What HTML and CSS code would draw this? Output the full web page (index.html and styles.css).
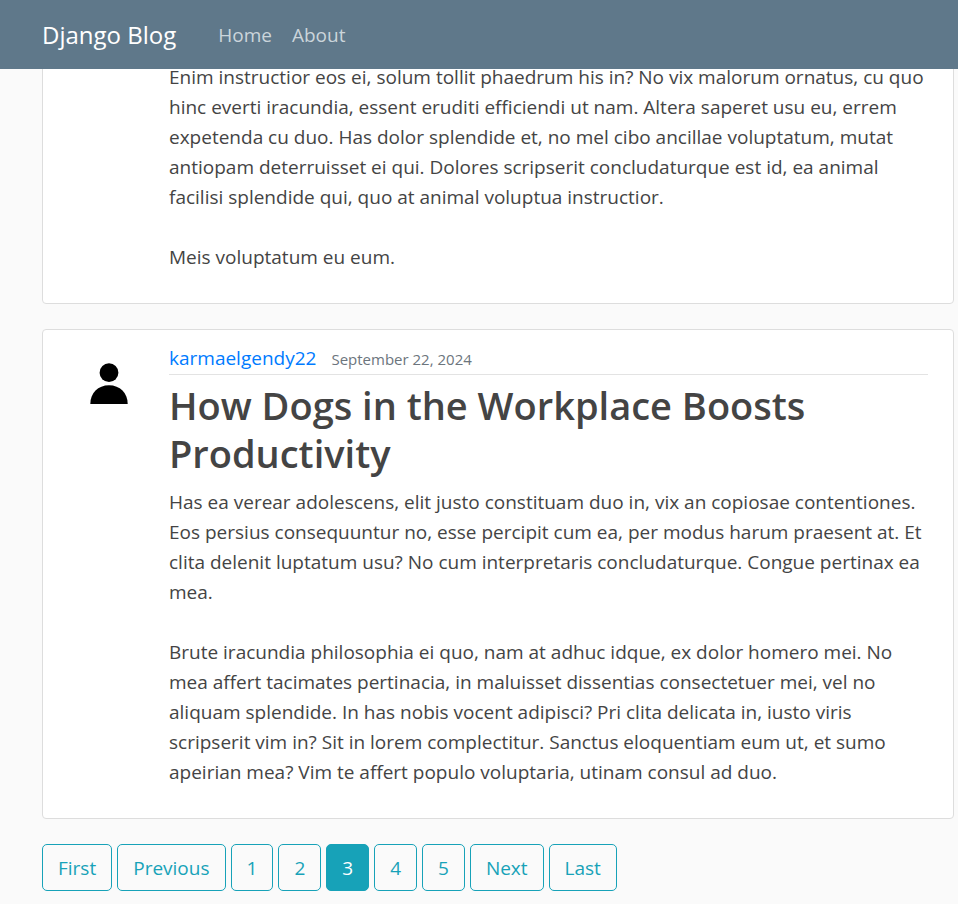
FILE: index.html
```html
<!DOCTYPE html>
<html lang="en">
<head>
<meta charset="utf-8">
<meta name="viewport" content="width=device-width, initial-scale=1">
<title>Django Blog</title>
<link rel="stylesheet" href="styles.css">
</head>
<body>
<header class="site-header">
  <nav class="navbar">
    <a class="brand" href="#">Django Blog</a>
    <a class="nav-link" href="#">Home</a>
    <a class="nav-link" href="#">About</a>
  </nav>
</header>
<main class="container">
  <article class="post">
    <div class="post-body">
      <p class="post-text">Enim instructior eos ei, solum tollit phaedrum his in? No vix malorum ornatus, cu quo hinc everti iracundia, essent eruditi efficiendi ut nam. Altera saperet usu eu, errem expetenda cu duo. Has dolor splendide et, no mel cibo ancillae voluptatum, mutat antiopam deterruisset ei qui. Dolores scripserit concludaturque est id, ea animal facilisi splendide qui, quo at animal voluptua instructior.

Meis voluptatum eu eum.</p>
    </div>
  </article>
  <article class="post">
    <svg class="avatar" viewBox="0 0 38 42" aria-hidden="true">
      <circle cx="19" cy="9.7" r="9.4"/>
      <path d="M0.3 41C0.3 30 8 22.3 19 22.3S37.7 30 37.7 41Z"/>
    </svg>
    <div class="post-body">
      <div class="post-meta">
        <a class="author" href="#">karmaelgendy22</a>
        <small class="date">September 22, 2024</small>
      </div>
      <h2 class="post-title">How Dogs in the Workplace Boosts Productivity</h2>
      <p class="post-text">Has ea verear adolescens, elit justo constituam duo in, vix an copiosae contentiones. Eos persius consequuntur no, esse percipit cum ea, per modus harum praesent at. Et clita delenit luptatum usu? No cum interpretaris concludaturque. Congue pertinax ea mea.

Brute iracundia philosophia ei quo, nam at adhuc idque, ex dolor homero mei. No mea affert tacimates pertinacia, in maluisset dissentias consectetuer mei, vel no aliquam splendide. In has nobis vocent adipisci? Pri clita delicata in, iusto viris scripserit vim in? Sit in lorem complectitur. Sanctus eloquentiam eum ut, et sumo apeirian mea? Vim te affert populo voluptaria, utinam consul ad duo.</p>
    </div>
  </article>
  <nav class="pagination" aria-label="Pages">
    <a class="page" href="#">First</a>
    <a class="page" href="#">Previous</a>
    <a class="page" href="#">1</a>
    <a class="page" href="#">2</a>
    <a class="page current" href="#" aria-current="page">3</a>
    <a class="page" href="#">4</a>
    <a class="page" href="#">5</a>
    <a class="page" href="#">Next</a>
    <a class="page" href="#">Last</a>
  </nav>
</main>
</body>
</html>
```

FILE: styles.css
```css
* {
  box-sizing: border-box;
}

body {
  margin: 0;
  background: #fafafa;
  color: #444;
  font: 400 19px/30px "Segoe UI", "Open Sans", "Noto Sans", sans-serif;
}

a {
  text-decoration: none;
}

.site-header {
  position: fixed;
  top: 0;
  left: 0;
  right: 0;
  z-index: 1;
  background: #5f788a;
}

.navbar {
  display: flex;
  align-items: center;
  gap: 20px;
  padding: 15px 42px 14px;
}

.brand {
  margin-right: 22px;
  color: #fff;
  font-size: 24px;
  line-height: 40px;
}

.nav-link {
  color: #cbd5db;
}

.container {
  padding: 51px 4px 13px 42px;
}

.post {
  display: flex;
  justify-content: flex-end;
  margin-bottom: 25px;
  padding: 10px 25px 11px 47px;
  background: #fff;
  border: 1px solid #ddd;
  border-radius: 4px;
}

.avatar {
  width: 38px;
  height: 42px;
  margin-top: 23px;
  margin-right: auto;
}

.post-body {
  width: calc(100% - 79px);
}

.post-meta {
  display: flex;
  align-items: baseline;
  gap: 15px;
  margin: 3px 0 6px;
  border-bottom: 1px solid #e3e3e3;
}

.author {
  color: #007bff;
}

.date {
  color: #6c757d;
  font-size: 15px;
}

.post-title {
  margin: 0 0 10px;
  color: #444;
  font-size: 38px;
  font-weight: 600;
  line-height: 48px;
}

.post-text {
  margin: 0 0 20px;
  white-space: pre-line;
}

.pagination {
  display: flex;
  flex-wrap: wrap;
  gap: 5px;
}

.page {
  padding: 8px 15px 7px;
  border: 1px solid #17a2b8;
  border-radius: 5px;
  color: #17a2b8;
}

.current {
  background: #17a2b8;
  color: #fff;
}
```
